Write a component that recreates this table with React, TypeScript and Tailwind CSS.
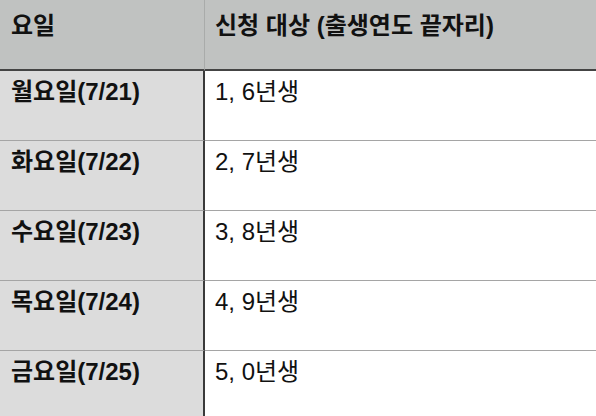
import React from "react";

const rows = [
  ["월요일(7/21)", "1, 6년생"],
  ["화요일(7/22)", "2, 7년생"],
  ["수요일(7/23)", "3, 8년생"],
  ["목요일(7/24)", "4, 9년생"],
  ["금요일(7/25)", "5, 0년생"],
];

export default function App() {
  return (
    <div
      className="w-[596px] h-[416px] overflow-hidden bg-white text-[#111] text-[24px] leading-[30px]"
      style={{ fontFamily: '"Liberation Sans", "Noto Sans CJK KR", sans-serif' }}
    >
      <div className="grid grid-cols-[205px_1fr]">
        <div className="h-[71px] bg-[#c0c2c1] border-b-2 border-r border-b-[#444] border-r-[#a9abaa] pl-[11px] pt-[11px] font-bold">
          요일
        </div>
        <div className="h-[71px] bg-[#c0c2c1] border-b-2 border-b-[#444] pl-[10px] pt-[11px] font-bold">
          신청 대상 (출생연도 끝자리)
        </div>
        {rows.map(([d, t], i) => (
          <React.Fragment key={i}>
            <div
              className={`h-[70px] bg-[#dcdcdc] border-r-2 border-r-[#3a3a3a] pl-[11px] pt-[6px] font-bold ${
                i < rows.length - 1 ? "border-b border-b-[#a5a5a5]" : ""
              }`}
            >
              {d}
            </div>
            <div
              className={`h-[70px] bg-white pl-[10px] pt-[6px] ${
                i < rows.length - 1 ? "border-b border-b-[#a5a5a5]" : ""
              }`}
            >
              {t}
            </div>
          </React.Fragment>
        ))}
      </div>
    </div>
  );
}
